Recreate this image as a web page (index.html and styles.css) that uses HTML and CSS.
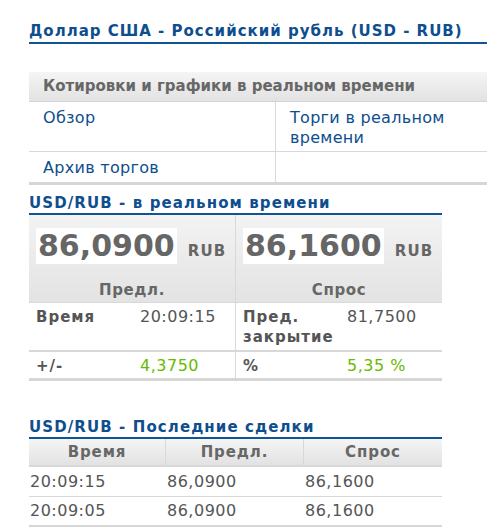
FILE: index.html
```html
<!DOCTYPE html>
<html>
<head>
<meta charset="UTF-8">
<title>USD - RUB</title>
<link rel="stylesheet" href="styles.css">
</head>
<body>

<div id="page">

  <h1 class="pageTitle">Доллар США - Российский рубль (USD - RUB)</h1>

  <div class="navBox">
    <div class="navHead">Котировки и графики в реальном времени</div>
    <div class="navRow">
      <a class="navCell" href="#">Обзор</a>
      <a class="navCell" href="#">Торги в реальном времени</a>
    </div>
    <div class="navRow last">
      <a class="navCell" href="#">Архив торгов</a>
      <span class="navCell"></span>
    </div>
  </div>

  <h2 class="boxTitle">USD/RUB - в реальном времени</h2>

  <div class="quoteBox">
    <div class="bigCell">
      <div class="bigLine"><span class="bigNum">86,0900</span><span class="cur">RUB</span></div>
      <div class="label">Предл.</div>
    </div>
    <div class="bigCell">
      <div class="bigLine"><span class="bigNum">86,1600</span><span class="cur">RUB</span></div>
      <div class="label">Спрос</div>
    </div>

    <div class="qCell first">
      <span class="qName">Время</span>
      <span class="qVal">20:09:15</span>
    </div>
    <div class="qCell first">
      <span class="qName">Пред. закрытие</span>
      <span class="qVal">81,7500</span>
    </div>

    <div class="qCell second">
      <span class="qName">+/-</span>
      <span class="qVal up">4,3750</span>
    </div>
    <div class="qCell second">
      <span class="qName">%</span>
      <span class="qVal up">5,35 %</span>
    </div>
  </div>

  <h2 class="boxTitle trades">USD/RUB - Последние сделки</h2>

  <div class="tradeBox">
    <div class="tHead">Время</div>
    <div class="tHead">Предл.</div>
    <div class="tHead">Спрос</div>

    <div class="tCell">20:09:15</div>
    <div class="tCell">86,0900</div>
    <div class="tCell">86,1600</div>

    <div class="tCell last">20:09:05</div>
    <div class="tCell last">86,0900</div>
    <div class="tCell last">86,1600</div>
  </div>

</div>

</body>
</html>
```

FILE: styles.css
```css
body{
  margin:0;
  background:#fff;
  font-family:"DejaVu Sans", Verdana, sans-serif;
  color:#555;
  overflow:hidden;
}

#page{
  padding:21px 0 0 29px;
}

a{
  color:#0e4e8e;
  text-decoration:none;
}

.pageTitle{
  margin:0;
  width:470px;
  font-size:15px;
  font-weight:bold;
  letter-spacing:1px;
  color:#0e4e8e;
  line-height:20px;
  padding-bottom:1px;
  border-bottom:2px solid #0e5496;
}

/* links box */

.navBox{
  margin-top:28px;
  width:470px;
  border-bottom:3px solid #d6d6d6;
}

.navHead{
  height:29px;
  line-height:29px;
  padding-left:14px;
  font-size:15px;
  font-weight:bold;
  color:#676767;
  background:linear-gradient(#f5f5f5,#e2e2e2);
  border-bottom:1px solid #d4d4d4;
}

.navRow{
  display:grid;
  grid-template-columns:247px 1fr;
  border-bottom:1px solid #d8d8d8;
}

.navRow.last{
  border-bottom:none;
}

.navCell{
  display:block;
  padding:6px 14px 3px 14px;
  font-size:16px;
  letter-spacing:0.3px;
  line-height:20px;
}

.navRow.last .navCell{
  padding-bottom:4px;
}

.navCell:first-child{
  border-right:1px solid #d8d8d8;
}

/* section titles */

.boxTitle{
  margin:8px 0 0 0;
  width:413px;
  font-size:15px;
  font-weight:bold;
  letter-spacing:1.1px;
  color:#0e4e8e;
  line-height:20px;
  border-bottom:2px solid #0e5496;
}

.boxTitle.trades{
  margin-top:36px;
}

/* realtime quote */

.quoteBox{
  width:413px;
  display:grid;
  grid-template-columns:207px 206px;
  border-bottom:3px solid #d6d6d6;
}

.bigCell{
  height:87px;
  padding-left:7px;
  background:linear-gradient(#f3f3f3,#e3e3e3);
  border-bottom:1px solid #d8d8d8;
}

.bigCell:first-child,
.qCell:nth-child(odd){
  border-right:1px solid #d8d8d8;
}

.bigLine{
  padding-top:13px;
  display:flex;
  align-items:baseline;
}

.bigNum{
  background:#fff;
  font-size:30px;
  font-weight:bold;
  color:#666;
  line-height:36px;
  padding:0 2px 0 2px;
}

.cur{
  font-size:15px;
  font-weight:bold;
  letter-spacing:1.2px;
  color:#666;
  margin-left:11px;
}

.label{
  margin:16px 0 0 -7px;
  text-align:center;
  font-weight:bold;
  font-size:15px;
  letter-spacing:0.6px;
  color:#676767;
  line-height:20px;
}

.qCell{
  display:grid;
  grid-template-columns:104px 1fr;
  padding:4px 0 0 7px;
  line-height:20px;
}

.qCell.first{
  padding-bottom:3px;
  border-bottom:2px solid #d8d8d8;
}

.qCell.second{
  padding-bottom:2px;
}

.qName{
  font-size:15px;
  font-weight:bold;
  letter-spacing:1px;
  color:#555;
}

.qVal{
  font-size:16px;
  letter-spacing:0.5px;
  color:#555;
}

.qVal.up{
  color:#66bb00;
}

/* last trades */

.tradeBox{
  width:413px;
  display:grid;
  grid-template-columns:137px 138px 138px;
  border-bottom:3px solid #d6d6d6;
}

.tHead{
  height:26px;
  line-height:26px;
  text-align:center;
  font-size:15px;
  font-weight:bold;
  letter-spacing:0.9px;
  color:#676767;
  background:linear-gradient(#f5f5f5,#e2e2e2);
  border-right:1px solid #d8d8d8;
  border-bottom:2px solid #d8d8d8;
}

.tHead:nth-child(3){
  border-right:none;
}

.tCell{
  padding:5px 0 4px 1px;
  font-size:16px;
  letter-spacing:0.5px;
  line-height:20px;
  color:#555;
  border-bottom:1px solid #d8d8d8;
}

.tCell.last{
  padding-top:4px;
  border-bottom:none;
}
```
